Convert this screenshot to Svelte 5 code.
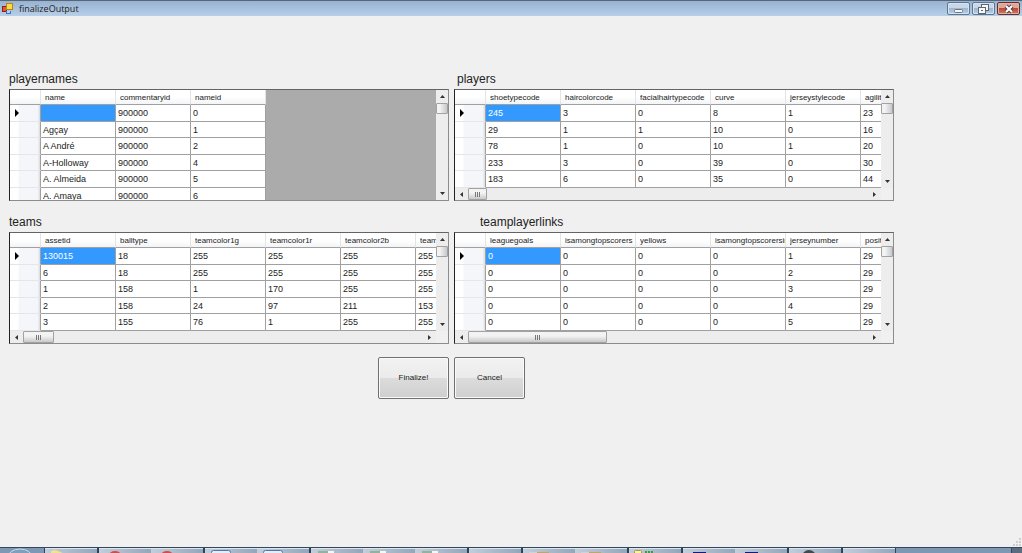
<script>
  const grids = [
    {
      title: 'playernames',
      indent: 0,
      columns: ['name', 'commentaryid', 'nameid'],
      rows: [
        ['', '900000', '0'],
        ['Agçay', '900000', '1'],
        ['A André', '900000', '2'],
        ['A-Holloway', '900000', '4'],
        ['A. Almeida', '900000', '5'],
        ['A. Amaya', '900000', '6']
      ],
      thumb: 0
    },
    {
      title: 'players',
      indent: 3,
      columns: ['shoetypecode', 'haircolorcode', 'facialhairtypecode', 'curve', 'jerseystylecode', 'agility'],
      rows: [
        ['245', '3', '0', '8', '1', '23'],
        ['29', '1', '1', '10', '0', '16'],
        ['78', '1', '0', '10', '1', '20'],
        ['233', '3', '0', '39', '0', '30'],
        ['183', '6', '0', '35', '0', '44']
      ],
      thumb: 19
    },
    {
      title: 'teams',
      indent: 0,
      columns: ['assetid', 'balltype', 'teamcolor1g', 'teamcolor1r', 'teamcolor2b', 'teamcolor2g'],
      rows: [
        ['130015', '18', '255', '255', '255', '255'],
        ['6', '18', '255', '255', '255', '255'],
        ['1', '158', '1', '170', '255', '255'],
        ['2', '158', '24', '97', '211', '153'],
        ['3', '155', '76', '1', '255', '255']
      ],
      thumb: 31
    },
    {
      title: 'teamplayerlinks',
      indent: 26,
      columns: ['leaguegoals', 'isamongtopscorers', 'yellows', 'isamongtopscorersinteam', 'jerseynumber', 'position'],
      rows: [
        ['0', '0', '0', '0', '1', '29'],
        ['0', '0', '0', '0', '2', '29'],
        ['0', '0', '0', '0', '3', '29'],
        ['0', '0', '0', '0', '4', '29'],
        ['0', '0', '0', '0', '5', '29']
      ],
      thumb: 139
    }
  ];

  // taskbar groups, each a list of window buttons
  const tasks = [
    ['folder'],
    ['red', 'red'],
    ['window', 'window'],
    ['sheet', 'sheet', 'sheet'],
    ['none'],
    ['box', 'box'],
    ['note'],
    ['navy', 'navy'],
    ['disc'],
    ['none']
  ];
</script>

<div class="window">
  <header class="titlebar">
    <svg class="app-icon" width="12" height="12" viewBox="0 0 12 12" aria-hidden="true">
      <rect x="0" y="3" width="5" height="6" fill="#8b2018" />
      <rect x="1" y="4" width="3" height="4" fill="#e0583c" />
      <rect x="4" y="0" width="7" height="7" fill="#b8860b" />
      <rect x="5" y="1" width="5" height="5" fill="#ffd84a" />
      <rect x="4" y="8" width="5" height="3" fill="#3f6fd0" />
      <rect x="5" y="8" width="3" height="2" fill="#b8d0fa" />
    </svg>
    <h1>finalizeOutput</h1>
    <div class="window-buttons">
      <button aria-label="Minimize">
        <svg width="12" height="10" viewBox="0 0 12 10">
          <rect x="1.5" y="5.5" width="8" height="3" rx="1" fill="#f4f6f8" stroke="#6c7580" />
        </svg>
      </button>
      <button aria-label="Restore">
        <svg width="12" height="10" viewBox="0 0 12 10">
          <rect x="3.5" y="0.5" width="7" height="6" fill="#f7f8fa" stroke="#5d6873" />
          <rect x="6" y="3" width="2" height="1" fill="#5d6873" />
          <rect x="0.5" y="3.5" width="7" height="6" fill="#f7f8fa" stroke="#5d6873" />
          <rect x="3" y="6" width="2" height="1" fill="#5d6873" />
        </svg>
      </button>
      <button class="close" aria-label="Close">
        <svg width="12" height="10" viewBox="0 0 12 10">
          <path d="M3 2l6 6M9 2l-6 6" stroke="#5c4444" stroke-width="4" />
          <path d="M3 2l6 6M9 2l-6 6" stroke="#fff" stroke-width="2" />
        </svg>
      </button>
    </div>
  </header>

  <main>
    <div class="grids">
      {#each grids as grid}
        <section>
          <h2 style="padding-left: {grid.indent}px">{grid.title}</h2>
          <div class="data-grid">
            <div class="viewport">
              <table aria-label={grid.title}>
                <thead>
                  <tr>
                    <th class="corner"></th>
                    {#each grid.columns as column}
                      <th scope="col"><span>{column}</span></th>
                    {/each}
                  </tr>
                </thead>
                <tbody>
                  {#each grid.rows as row, r}
                    <tr>
                      <th class="row-head">
                        {#if r === 0}
                          <svg width="4" height="8" viewBox="0 0 4 8" aria-hidden="true">
                            <path d="M0 0l4 4-4 4z" />
                          </svg>
                        {/if}
                      </th>
                      {#each row as value, c}
                        <td class:selected={r === 0 && c === 0}>{value}</td>
                      {/each}
                    </tr>
                  {/each}
                </tbody>
              </table>
            </div>
            <div class="vscroll">
              <button aria-label="Scroll up">
                <svg width="5" height="3" viewBox="0 0 5 3"><path d="M0 3l2.5-3 2.5 3z" /></svg>
              </button>
              <div class="thumb"></div>
              <button class="end" aria-label="Scroll down">
                <svg width="5" height="3" viewBox="0 0 5 3"><path d="M0 0l2.5 3 2.5-3z" /></svg>
              </button>
            </div>
            {#if grid.thumb}
              <div class="hscroll">
                <button aria-label="Scroll left">
                  <svg width="3" height="5" viewBox="0 0 3 5"><path d="M3 0l-3 2.5 3 2.5z" /></svg>
                </button>
                <div class="thumb" style="width: {grid.thumb}px">
                  <svg width="7" height="5" viewBox="0 0 7 5"><path d="M1 0h1v5h-1zM3 0h1v5h-1zM5 0h1v5h-1z" /></svg>
                </div>
                <button class="end" aria-label="Scroll right">
                  <svg width="3" height="5" viewBox="0 0 3 5"><path d="M0 0l3 2.5-3 2.5z" /></svg>
                </button>
              </div>
            {/if}
          </div>
        </section>
      {/each}
    </div>

    <div class="actions">
      <button>Finalize!</button>
      <button>Cancel</button>
    </div>
  </main>

  <svg class="grip" width="9" height="9" viewBox="0 0 9 9" aria-hidden="true">
    <path d="M6 0h2v2h-2zM3 3h2v2h-2zM6 3h2v2h-2zM0 6h2v2h-2zM3 6h2v2h-2zM6 6h2v2h-2z" fill="#cfcfcf" />
  </svg>

  <footer class="taskbar">
    <div class="start">
      <svg width="26" height="5" viewBox="0 0 26 5">
        <ellipse cx="13" cy="9" rx="12" ry="8" fill="#7f9fbd" stroke="#c9dbea" />
      </svg>
    </div>
    {#each tasks as group}
      <div class="task-group">
        {#each group as icon}
          <div class="task">
            <svg width="22" height="5" viewBox="0 0 22 5">
              {#if icon === 'folder'}
                <path d="M1 5V2l4-1 3 1 7 3z" fill="#f2e391" />
              {:else if icon === 'red'}
                <ellipse cx="11" cy="6" rx="6" ry="4" fill="#cf4f48" />
              {:else if icon === 'window'}
                <rect x="1.5" y="1.5" width="19" height="8" rx="2" fill="#e4eefa" stroke="#4a78b5" />
              {:else if icon === 'sheet'}
                <rect x="2" y="2" width="16" height="6" fill="#f4f8f4" />
                <rect x="2" y="2" width="10" height="6" fill="#8fb49a" />
              {:else if icon === 'box'}
                <rect x="1" y="3" width="12" height="3" fill="#ccd3d9" />
                <rect x="9" y="3" width="12" height="3" fill="#c0a56c" />
              {:else if icon === 'note'}
                <rect x="0.5" y="1.5" width="7" height="6" rx="1" fill="#fbf3a0" stroke="#a99a45" />
                <path d="M11 2h2v2h-2zM14 2h2v2h-2zM17 2h2v2h-2z" fill="#3f9a48" />
              {:else if icon === 'navy'}
                <rect x="5" y="3" width="13" height="4" fill="#141c78" />
              {:else if icon === 'disc'}
                <circle cx="15" cy="8" r="7" fill="#43484d" />
              {/if}
            </svg>
          </div>
        {/each}
      </div>
    {/each}
    <div class="show-desktop"></div>
  </footer>
</div>

<style>
  :global(body) {
    margin: 0;
    background: #f0f0f0;
  }

  .window {
    display: flex;
    flex-direction: column;
    min-height: 100vh;
    background: #f0f0f0;
    color: #222;
    font: 8px/12px "Liberation Sans", Arial, sans-serif;
  }

  button {
    padding: 0;
    font: inherit;
    color: inherit;
  }

  svg {
    display: block;
  }

  .titlebar {
    display: flex;
    align-items: center;
    box-sizing: border-box;
    height: 16px;
    padding: 0 2px;
    border-top: 1px solid #56677a;
    background: linear-gradient(#98b2d1, #b7cfe8);
  }

  h1 {
    flex: 1;
    margin: 0 0 0 5px;
    font: 9px/14px "Open Sans", "Noto Sans", sans-serif;
  }

  .window-buttons {
    display: flex;
    gap: 2px;
  }

  .window-buttons button {
    display: flex;
    align-items: center;
    justify-content: center;
    width: 23px;
    height: 13px;
    border: 1px solid #60758e;
    border-radius: 2px;
    background: linear-gradient(#c7d8ea 45%, #9db6d1 50%, #b7cee6);
    box-shadow: inset 0 0 0 1px #d5e3f1;
  }

  .window-buttons .close {
    border-color: #64302f;
    background: linear-gradient(#dfa79b 45%, #bc4a34 50%, #cf7a62);
    box-shadow: inset 0 0 0 1px #e3b3a8;
  }

  main {
    flex: 1;
    padding: 42px 128px 0 9px;
  }

  .grids {
    display: grid;
    grid-template-columns: 1fr 1fr;
    column-gap: 5px;
  }

  section {
    min-width: 0;
  }

  h2 {
    margin: 0;
    padding: 12px 0 1px;
    font: 12px/18px "Liberation Sans", Arial, sans-serif;
  }

  .data-grid {
    display: grid;
    grid-template-columns: 1fr 12px;
    grid-template-rows: 1fr auto;
    box-sizing: border-box;
    height: 112px;
    border: 1px solid #8c8c8c;
    border-top-color: #646464;
    border-left-color: #222;
    background: #f0f0f0;
  }

  .viewport {
    overflow: hidden;
    background: #ababab;
  }

  table {
    width: min-content;
    table-layout: fixed;
    border-collapse: separate;
    border-spacing: 0;
    background: #fff;
  }

  th,
  td {
    box-sizing: border-box;
    width: 75px;
    min-width: 75px;
    max-width: 75px;
    height: 16px;
    padding: 0 2px;
    border-right: 1px solid #a0a0a0;
    border-bottom: 1px solid #a0a0a0;
    font-weight: normal;
    text-align: left;
    white-space: nowrap;
    overflow: hidden;
  }

  td {
    font-size: 9px;
  }

  thead th {
    height: 15px;
    padding: 1px 0 0 4px;
    border-right-color: #e2e4e7;
    background: linear-gradient(#fff 50%, #f3f4f6);
  }

  thead span {
    display: block;
    overflow: hidden;
  }

  tbody tr:nth-child(odd) > * {
    height: 17px;
  }

  .corner,
  .row-head {
    width: 31px;
    min-width: 31px;
    max-width: 31px;
  }

  .row-head {
    padding: 0 0 0 5px;
    border-bottom-color: #e4e6e9;
    background: linear-gradient(to right, #fff 8px, #f5f6f9 9px 28px, #dfe1e4 29px);
  }

  .selected {
    background: #39f;
    color: #fff;
  }

  .vscroll {
    display: flex;
    flex-direction: column;
    background: #ededed;
  }

  .hscroll {
    display: flex;
    height: 12px;
    background: #ededed;
  }

  .vscroll button,
  .hscroll button {
    display: flex;
    align-items: center;
    justify-content: center;
    width: 12px;
    height: 13px;
    border: 0;
    background: none;
    fill: #333;
  }

  .hscroll button {
    width: 13px;
    height: 12px;
  }

  .vscroll .end {
    margin-top: auto;
  }

  .hscroll .end {
    margin-left: auto;
  }

  .thumb {
    display: flex;
    align-items: center;
    justify-content: center;
    box-sizing: border-box;
    border: 1px solid #a2a2a2;
    border-radius: 1px;
    background: linear-gradient(#f3f3f3 40%, #c8c9cc);
  }

  .thumb svg {
    fill: #777;
  }

  .vscroll .thumb {
    height: 11px;
    background: linear-gradient(to right, #f3f3f3 30%, #c8c9cc);
  }

  .actions {
    display: flex;
    justify-content: center;
    gap: 5px;
    padding-top: 13px;
  }

  .actions button {
    width: 71px;
    height: 42px;
    border: 1px solid #707070;
    border-radius: 2px;
    background: linear-gradient(#f2f2f2, #ebebeb 49%, #dcdcdc 50%, #cfcfcf);
    box-shadow: inset 0 0 0 1px #fafafa;
  }

  .grip {
    align-self: flex-end;
  }

  .taskbar {
    display: flex;
    height: 5px;
    overflow: hidden;
    border-top: 1px solid #33475e;
    background: #7e98b3;
  }

  .start {
    width: 37px;
    padding-left: 7px;
  }

  .task-group {
    display: flex;
    border-right: 1px solid #2d435c;
    border-left: 1px solid #2d435c;
  }

  .task {
    box-sizing: border-box;
    width: 52px;
    padding-left: 5px;
    border-top: 1px solid #dde5ee;
    background: linear-gradient(to right, #c3ced9, #93a6ba);
  }

  .show-desktop {
    width: 10px;
    margin-left: auto;
    border-left: 1px solid #33475e;
    background: #5d6c7c;
  }
</style>
